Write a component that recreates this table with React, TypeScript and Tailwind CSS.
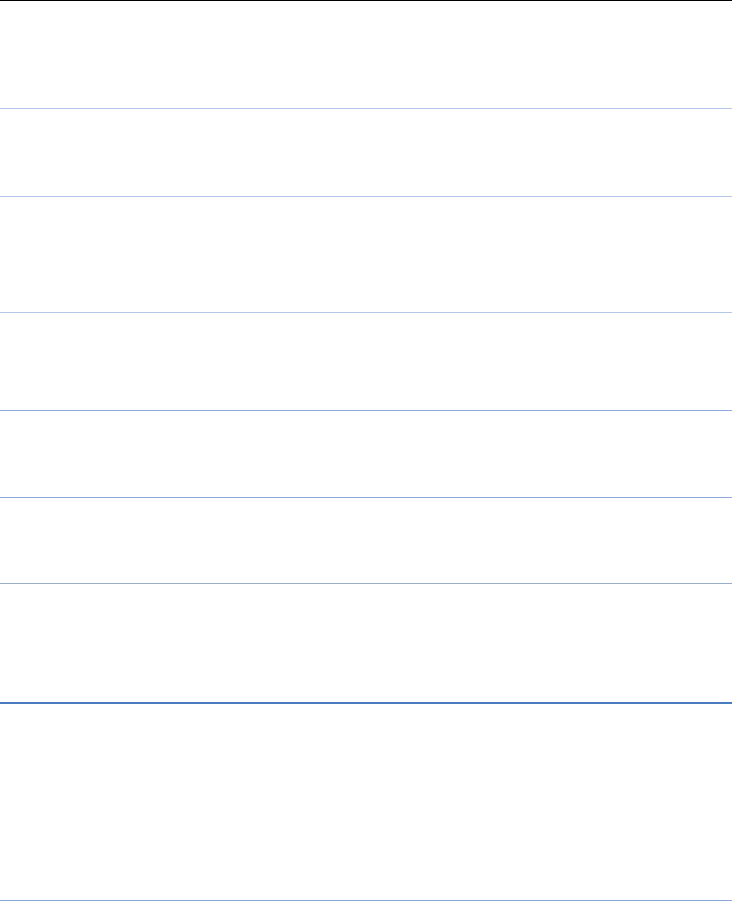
export default function App() {
    return (
        <div className="w-[732px] h-[901px] bg-white flex flex-col overflow-hidden">
            {/* top rule */}
            <div className="h-px bg-black shrink-0" />

            <div className="h-[108px] shrink-0 border-b border-[#b4c7e7]" />
            <div className="h-[88px] shrink-0 border-b border-[#b4c7e7]" />
            <div className="h-[116px] shrink-0 border-b border-[#b4c7e7]" />
            <div className="h-[98px] shrink-0 border-b border-[#8eaadb]" />
            <div className="h-[87px] shrink-0 border-b border-[#8eaadb]" />
            <div className="h-[86px] shrink-0 border-b border-[#9aaec9]" />
            <div className="h-[120px] shrink-0 border-b-2 border-[#4a7dc0]" />
            <div className="h-[197px] shrink-0 border-b border-[#8eaadb]" />
        </div>
    );
}
